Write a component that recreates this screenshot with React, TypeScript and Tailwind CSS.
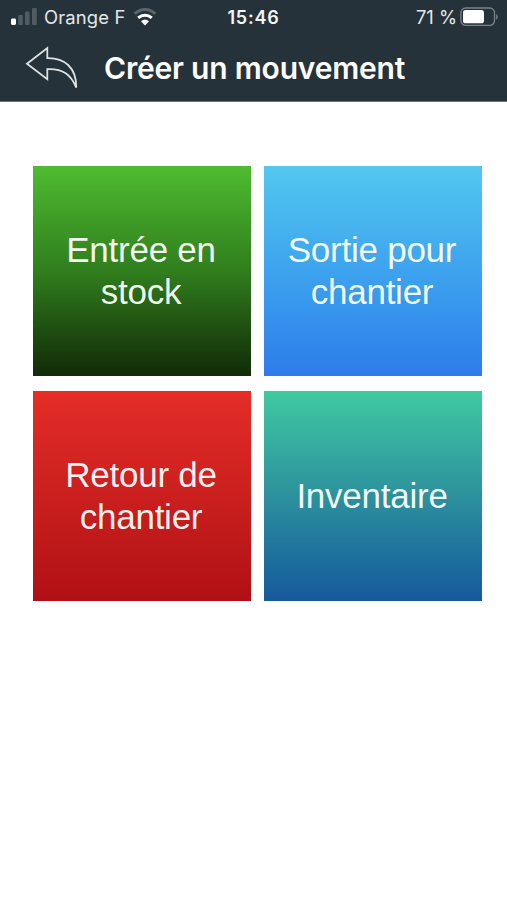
const tiles = [
  { lines: ['Entrée en', 'stock'], fill: 'bg-linear-to-b from-[#4fbc31] via-[#307e1d] to-[#112c08]' },
  { lines: ['Sortie pour', 'chantier'], fill: 'bg-linear-to-b from-[#53c8ef] to-[#2e7ceb]' },
  { lines: ['Retour de', 'chantier'], fill: 'bg-linear-to-b from-[#e52d27] to-[#b01015]' },
  { lines: ['Inventaire'], fill: 'bg-linear-to-b from-[#40c9a0] via-[#2d919d] to-[#17599c] pb-px' },
];

function SignalIcon() {
  return (
    <svg width="28" height="18" viewBox="0 0 28 18" className="shrink-0">
      <rect x="1" y="10.4" width="5" height="6.6" rx="1.4" fill="#fff" />
      <g fill="#505c62">
        <rect x="8.2" y="7" width="4.6" height="10" rx="1" />
        <rect x="15" y="3.4" width="4.6" height="13.6" rx="1" />
        <rect x="22" y="0" width="4.8" height="17" rx="1" />
      </g>
    </svg>
  );
}

function WifiIcon() {
  return (
    <svg width="24" height="18" viewBox="0 0 24 18" fill="none" strokeWidth="3" className="shrink-0">
      <path d="M1.7 5.8C7.5.1 16.5.1 22.3 5.8" stroke="#5a666c" />
      <path d="M5.2 9.9C9.2 6.2 14.8 6.2 18.8 9.9" stroke="#fff" />
      <path d="M8 13.2Q12 10 16 13.2L12 17.4Z" fill="#fff" />
    </svg>
  );
}

function BatteryIcon() {
  return (
    <svg width="39" height="20" viewBox="0 0 39 20" className="shrink-0">
      <rect x="0.9" y="1" width="33.6" height="17.4" rx="4.8" fill="none" stroke="#7a8489" strokeWidth="1.3" />
      <rect x="3" y="3.1" width="21" height="13.2" rx="2.6" fill="#fff" />
      <path d="M36.2 6.9Q37.8 7.8 37.8 9.8T36.2 12.7Z" fill="#7a8489" />
    </svg>
  );
}

function BackIcon() {
  return (
    <svg width="54" height="46" viewBox="0 0 54 46" fill="none" stroke="#dde2e3" strokeWidth="1.8" className="shrink-0">
      <path d="M2 18.8L22.3 3V13.1C39 12.7 51.5 22 51.3 42.6C46 29.5 38 23.4 22.3 24.1V34.2Z" />
    </svg>
  );
}

export default function App() {
  return (
    <div className="flex h-[900px] w-[507px] flex-col overflow-hidden bg-white font-['Inter','Liberation_Sans',sans-serif]">
      <header className="flex h-[102px] shrink-0 flex-col border-b border-[#6d777b] bg-[#263239] text-white">
        <div className="grid h-[34px] grid-cols-3 items-start text-[18px] leading-[34px]">
          <div className="flex h-[33px] items-center pl-[10px]">
            <SignalIcon />
            <span className="ml-[6px] w-[84px] whitespace-nowrap text-[18.4px] tracking-[0.15px] text-[#e4e8ea]">Orange F</span>
            <span className="ml-[5px]"><WifiIcon /></span>
          </div>
          <div className="pt-px text-center font-semibold tracking-[0.8px] text-[#f2f5f6]">15:46</div>
          <div className="flex h-[33px] items-center justify-end pr-[8px] text-[#e4e8ea]">
            <span className="mr-[3px] pt-px whitespace-nowrap text-[18.4px]">71 %</span>
            <BatteryIcon />
          </div>
        </div>
        <div className="flex h-[67px] items-center pl-[25px]">
          <BackIcon />
          <h1 className="ml-[25px] whitespace-nowrap text-[30px] leading-[40px] font-semibold tracking-[-0.2px]">Créer un mouvement</h1>
        </div>
      </header>
      <main className="grid grid-cols-[218.5px_218.5px] grid-rows-[210.5px_210.5px] gap-x-[12.5px] gap-y-[14.5px] pt-[63.5px] pl-[32.5px]">
        {tiles.map((tile) => (
          <button
            key={tile.lines.join(' ')}
            className={`flex flex-col items-center justify-center pr-[1.5px] font-['Liberation_Sans',Arial,sans-serif] text-[35px] leading-[41.5px] tracking-[-0.25px] text-white/95 ${tile.fill}`}
          >
            {tile.lines.map((line) => (
              <span key={line} className="whitespace-nowrap">{line}</span>
            ))}
          </button>
        ))}
      </main>
    </div>
  );
}
